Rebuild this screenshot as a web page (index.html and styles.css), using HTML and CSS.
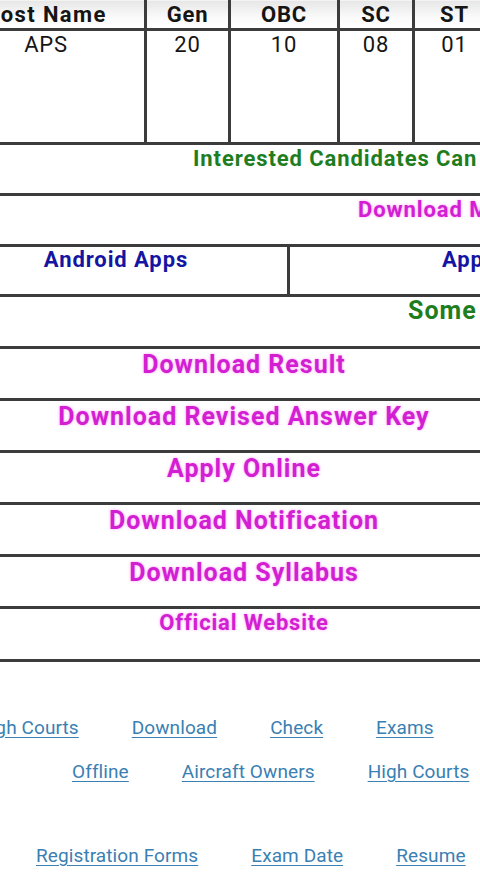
FILE: index.html
```html
<!DOCTYPE html>
<html lang="en">
<head>
<meta charset="utf-8">
<title>Vacancy</title>
<link rel="stylesheet" href="styles.css">
</head>
<body>
<div class="page">
  <table class="vac">
    <thead>
      <tr>
        <th class="c1">Post Name</th>
        <th class="c2">Gen</th>
        <th class="c3">OBC</th>
        <th class="c4">SC</th>
        <th class="c5">ST</th>
        <th class="c6">Total</th>
      </tr>
    </thead>
    <tbody>
      <tr>
        <td>APS</td>
        <td>20</td>
        <td>10</td>
        <td>08</td>
        <td>01</td>
        <td>39</td>
      </tr>
    </tbody>
  </table>

  <div class="row off green g1">Interested Candidates Can Read the Full Notification Before Apply Online</div>
  <div class="row off pink p1">Download Mobile App</div>
  <div class="row split">
    <div class="cell left blue">Android Apps</div>
    <div class="cell right blue">Apple Apps</div>
  </div>
  <div class="row off green g2">Some Useful Important Links</div>
  <div class="row center pink">Download Result</div>
  <div class="row center pink">Download Revised Answer Key</div>
  <div class="row center pink">Apply Online</div>
  <div class="row center pink">Download Notification</div>
  <div class="row center pink">Download Syllabus</div>
  <div class="row center pink small">Official Website</div>

  <div class="links l1">
    <a href="#">High Courts</a>
    <a href="#">Download</a>
    <a href="#">Check</a>
    <a href="#">Exams</a>
  </div>
  <div class="links l2">
    <a href="#">Offline</a>
    <a href="#">Aircraft Owners</a>
    <a href="#">High Courts</a>
  </div>
  <div class="links l3">
    <a href="#">Registration Forms</a>
    <a href="#">Exam Date</a>
    <a href="#">Resume</a>
  </div>
</div>
</body>
</html>
```

FILE: styles.css
```css
html, body {
  margin: 0;
  padding: 0;
  background: #fff;
  overflow: hidden;
}
body {
  width: 480px;
  height: 891px;
  font-family: Roboto, "Liberation Sans", Arial, sans-serif;
}
.page {
  margin-left: -55px;
  width: 598px;
}
.vac {
  border-collapse: collapse;
  width: 598px;
  table-layout: fixed;
  margin-top: -3px;
}
.vac th, .vac td {
  border: 3px solid #3c3c3c;
  text-align: center;
  font-size: 22px;
  letter-spacing: 0.8px;
  color: #151515;
  padding: 0;
}
.vac th {
  font-weight: 700;
  height: 26px;
  line-height: 24px;
  padding-top: 2px;
  background: linear-gradient(#e6e6e6, #fafafa 60%, #ffffff);
}
.vac th.c1 { letter-spacing: 1.4px; }
.vac td {
  font-weight: 400;
  height: 110px;
  vertical-align: top;
  line-height: 26px;
  padding-top: 1px;
}
.vac .c1 { width: 196px; }
.vac .c2 { width: 81px; }
.vac .c3 { width: 106px; }
.vac .c4 { width: 72px; }
.vac .c5 { width: 79px; }
.vac .c6 { width: auto; }

.row {
  border-bottom: 3px solid #3c3c3c;
  box-sizing: content-box;
  font-weight: 700;
  white-space: nowrap;
  overflow: hidden;
  line-height: 28px;
  padding-top: 0;
}
.center {
  text-align: center;
  font-size: 25px;
  letter-spacing: 1px;
  padding-top: 2px;
  height: 47px;
}
.center.small {
  font-size: 22px;
  letter-spacing: 0.8px;
  padding-top: 0;
  height: 50px;
}
.off {
  font-size: 22px;
  letter-spacing: 0.9px;
  height: 48px;
}
.g1 { padding-left: 248px; }
.p1 { padding-left: 413px; }
.off.g2 {
  padding-left: 463px;
  padding-top: 0;
  height: 49px;
  font-size: 25px;
  letter-spacing: 1px;
  word-spacing: 6px;
}

.green { color: #1e7d1e; }
.pink {
  color: #d21fd2;
  text-shadow: 0 0 3px rgba(255, 120, 255, 0.7);
}
.blue { color: #1515a2; }

.split {
  display: flex;
  height: 47px;
}
.cell {
  font-size: 22px;
  letter-spacing: 0.9px;
  line-height: 26px;
  height: 47px;
}
.cell.left {
  flex: 0 0 auto;
  width: 342px;
  text-align: center;
  border-right: 3px solid #3c3c3c;
}
.cell.right {
  flex: 1 1 0;
  min-width: 0;
  overflow: hidden;
  padding-left: 152px;
}

.links {
  display: flex;
  gap: 53px;
  font-size: 19px;
  letter-spacing: 0.1px;
  line-height: 24px;
  white-space: nowrap;
}
.links a {
  color: #3a80b3;
  text-decoration: underline;
  text-underline-offset: 3px;
}
.l1 { padding-left: 32px; margin-top: 54px; }
.l2 { padding-left: 127px; margin-top: 20px; }
.l3 { padding-left: 91px; margin-top: 60px; }
```
